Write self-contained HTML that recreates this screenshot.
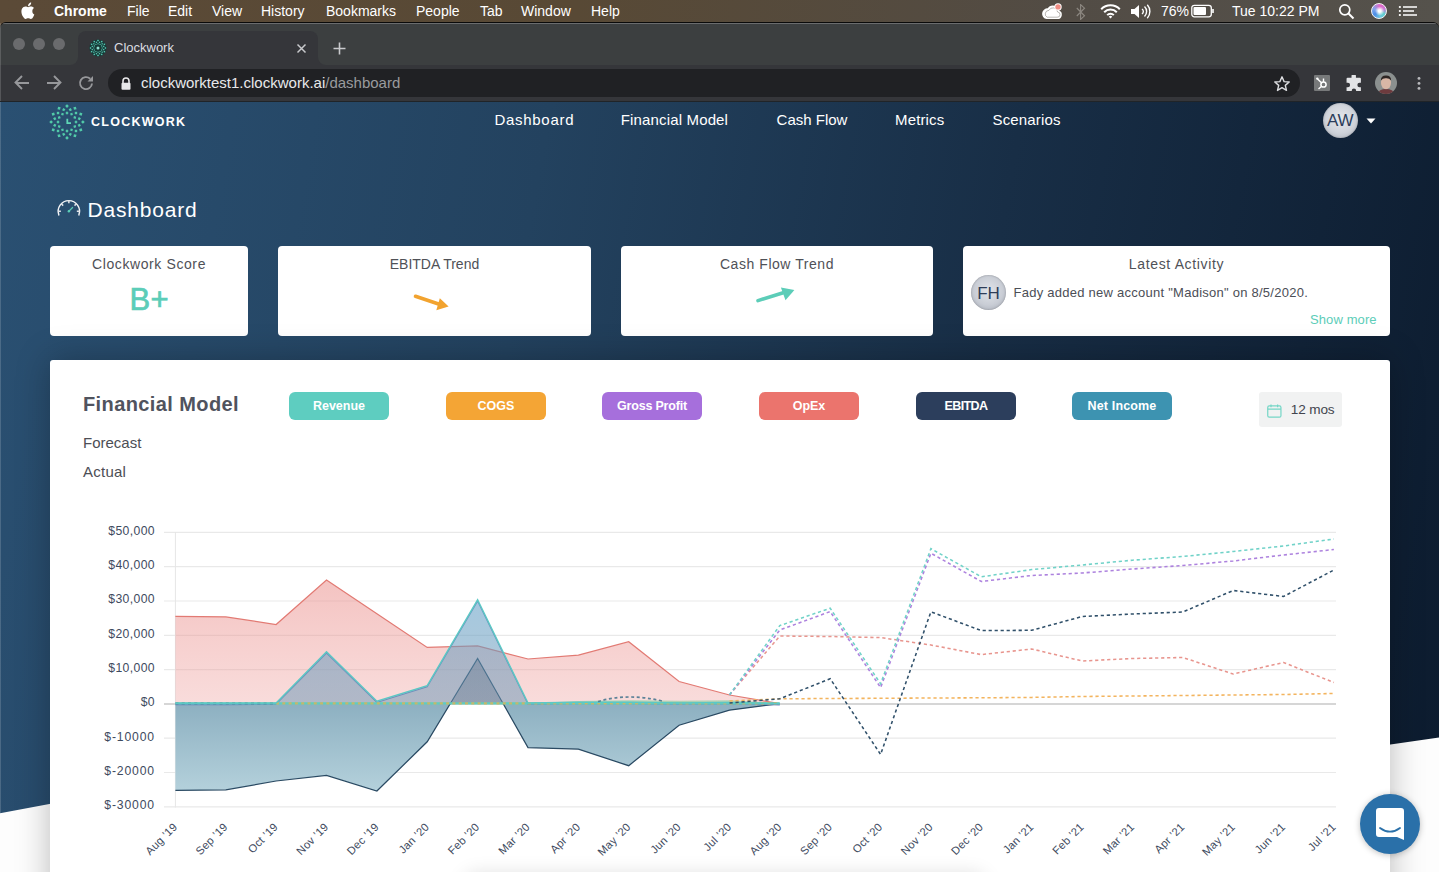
<!DOCTYPE html>
<html><head><meta charset="utf-8">
<style>
*{margin:0;padding:0;box-sizing:border-box}
html,body{width:1439px;height:872px;overflow:hidden;background:#fff;font-family:"Liberation Sans",sans-serif}
.a{position:absolute;white-space:nowrap}
#menubar{position:absolute;left:0;top:0;width:1439px;height:30px;background:linear-gradient(90deg,#5b4a37 0%,#584935 40%,#524c45 75%,#55524c 100%)}
.mb{position:absolute;top:3px;font-size:14px;color:#fff;line-height:16px}
#frame{position:absolute;left:0;top:22px;width:1439px;height:79px;background:#3c3f40;border-top:1px solid #0a0a0a;border-radius:6px 6px 0 0;overflow:hidden}
#page{position:absolute;left:0;top:101px;width:1439px;height:771px;overflow:hidden;background:linear-gradient(100deg,#2a5072 0%,#23425f 35%,#182e46 65%,#0c1b2e 100%)}
.card{position:absolute;background:#fff;border-radius:4px}
.ct{position:absolute;font-size:14px;color:#4f5157;line-height:1;white-space:nowrap}
.nav{position:absolute;font-size:15px;color:#fff;line-height:1;white-space:nowrap}
.btn{position:absolute;width:100px;height:28px;border-radius:6px;color:#fff;font-size:12.5px;font-weight:bold;text-align:center;line-height:28px}
</style></head><body>

<div id="menubar">
  <svg class="a" style="left:20px;top:2px" width="15" height="17" viewBox="0 0 15 17"><path fill="#fff" d="M12.3 9.1c0-2 1.6-2.9 1.7-3-0.9-1.4-2.4-1.6-2.9-1.6-1.2-0.1-2.4 0.7-3 0.7-0.6 0-1.6-0.7-2.6-0.7C4.100 4.500 2.800 5.300 2.100 6.600 0.700 9.100 1.700 12.800 3.100 14.800c0.700 1 1.500 2.100 2.500 2.100 1-0.1 1.400-0.600 2.600-0.600 1.200 0 1.500 0.600 2.600 0.600 1.100 0 1.800-1 2.400-2 0.800-1.100 1.100-2.200 1.100-2.300-0.100 0-2.100-0.800-2.000-3.500zM10.400 3.100c0.500-0.700 0.900-1.600 0.800-2.500-0.800 0-1.700 0.500-2.300 1.200-0.500 0.600-0.900 1.500-0.800 2.400 0.900 0.100 1.700-0.400 2.300-1.100z"/></svg>
  <div class="mb" style="left:54px;font-weight:bold">Chrome</div>
  <div class="mb" style="left:127px">File</div>
  <div class="mb" style="left:168px">Edit</div>
  <div class="mb" style="left:212px">View</div>
  <div class="mb" style="left:261px">History</div>
  <div class="mb" style="left:326px">Bookmarks</div>
  <div class="mb" style="left:416px">People</div>
  <div class="mb" style="left:480px">Tab</div>
  <div class="mb" style="left:521px">Window</div>
  <div class="mb" style="left:591px">Help</div>
  
  <svg class="a" style="left:1041px;top:3px" width="23" height="17" viewBox="0 0 23 17"><path d="M5.8 15.3H16.4A3.6 3.6 0 0 0 17.6 8.3A5.6 5.6 0 0 0 7.2 6.2A4.6 4.6 0 0 0 5.8 15.3Z" fill="#fff" stroke="#fff" stroke-width="1.6"/><path d="M6.2 14.2H16.2A2.6 2.6 0 0 0 16.6 9A4.6 4.6 0 0 0 7.9 7.4A3.6 3.6 0 0 0 6.2 14.2Z" fill="none" stroke="#6b655e" stroke-width="0.6" opacity="0.8"/><circle cx="17" cy="3.9" r="3.7" fill="#fff"/><circle cx="17" cy="3.9" r="2.7" fill="#f08c83"/></svg>
  <svg class="a" style="left:1075.5px;top:3.6px" width="10" height="16" viewBox="0 0 10 16"><path d="M0.8 4L8.5 11.8L4.6 15.4V0.6L8.5 4.2L0.8 12" stroke="#8c8780" stroke-width="1.15" fill="none" stroke-linejoin="miter"/></svg>
  <svg class="a" style="left:1100px;top:4px" width="21" height="15" viewBox="0 0 21 15"><path d="M1.2 5.2A13 13 0 0 1 19.8 5.2M4.2 8.2A8.8 8.8 0 0 1 16.8 8.2M7.2 11.1A4.6 4.6 0 0 1 13.8 11.1" stroke="#fff" stroke-width="2" fill="none"/><path d="M8.8 12.7L10.5 14.5L12.2 12.7A2.4 2.4 0 0 0 8.8 12.7Z" fill="#fff"/></svg>
  <svg class="a" style="left:1130px;top:4px" width="22" height="15" viewBox="0 0 22 15"><path d="M1 5H4.5L9 1V14L4.5 10H1Z" fill="#fff"/><path d="M12 5A3 3 0 0 1 12 10M14.5 2.5A7 7 0 0 1 14.5 12.5M17.3 0.8A10 10 0 0 1 17.3 14.2" stroke="#fff" stroke-width="1.4" fill="none"/></svg>
  <svg class="a" style="left:1191px;top:4px" width="24" height="14" viewBox="0 0 24 14"><rect x="0.8" y="1.3" width="19.5" height="11.5" rx="2.5" stroke="#fff" stroke-width="1.3" fill="none"/><rect x="2.5" y="3" width="12.5" height="8" rx="1" fill="#fff"/><path d="M22 5V9" stroke="#fff" stroke-width="1.6"/></svg>
  <svg class="a" style="left:1338px;top:3px" width="17" height="17" viewBox="0 0 17 17"><circle cx="6.8" cy="6.8" r="5" stroke="#fff" stroke-width="1.7" fill="none"/><path d="M10.5 10.5L15.5 15.5" stroke="#fff" stroke-width="2"/></svg>
  <div class="a" style="left:1370.8px;top:3px;width:16px;height:16px;border-radius:50%;border:1.2px solid #f4f4f6;background:radial-gradient(circle at 55% 50%,#ffffff 0 12%,rgba(255,255,255,0) 45%),conic-gradient(from 10deg,#e565c6,#c97bd8 60deg,#5fd1cf 110deg,#6ec8e0 160deg,#4d8de6 220deg,#7fa6ec 280deg,#e565c6)"></div>
  <svg class="a" style="left:1398px;top:4px" width="20" height="14" viewBox="0 0 20 14"><path d="M5 3H19M5 7H16M5 11H19" stroke="#fff" stroke-width="1.7"/><rect x="0.9" y="2.1" width="1.9" height="1.8" fill="#fff"/><rect x="0.9" y="6.1" width="1.9" height="1.8" fill="#fff"/><rect x="0.9" y="10.1" width="1.9" height="1.8" fill="#fff"/></svg>
<div class="mb" style="left:1161px;font-size:14px">76%</div>
  <div class="mb" style="left:1232px">Tue 10:22 PM</div>
</div>

<div id="frame">
  <div class="a" style="left:0;top:0;width:1439px;height:1px;background:#6a6c6e"></div>
  <div class="a" style="left:13px;top:15px;width:12px;height:12px;border-radius:50%;background:#6a6b6d"></div>
  <div class="a" style="left:33px;top:15px;width:12px;height:12px;border-radius:50%;background:#6a6b6d"></div>
  <div class="a" style="left:53px;top:15px;width:12px;height:12px;border-radius:50%;background:#6a6b6d"></div>
  <div class="a" style="left:70px;top:34px;width:256px;height:8px;background:#35363a"></div><div class="a" style="left:70px;top:34px;width:8px;height:8px;background:#3c3f40;border-radius:0 0 8px 0"></div><div class="a" style="left:318px;top:34px;width:8px;height:8px;background:#3c3f40;border-radius:0 0 0 8px"></div><div class="a" style="left:78px;top:8px;width:240px;height:34px;background:#35363a;border-radius:8px 8px 0 0"></div>
  <svg class="a" style="left:88.2px;top:14.9px" width="20" height="20" viewBox="-10 -10 20 20"><circle r="8.6" fill="#123a36" opacity="0.85"/><g fill="#55c4b0"><rect x="-0.75" y="-8.15" width="1.5" height="1.5" transform="rotate(45 0.00 -7.40)"/><rect x="2.95" y="-7.16" width="1.5" height="1.5" transform="rotate(75 3.70 -6.41)"/><rect x="5.66" y="-4.45" width="1.5" height="1.5" transform="rotate(105 6.41 -3.70)"/><rect x="6.65" y="-0.75" width="1.5" height="1.5" transform="rotate(135 7.40 -0.00)"/><rect x="5.66" y="2.95" width="1.5" height="1.5" transform="rotate(165 6.41 3.70)"/><rect x="2.95" y="5.66" width="1.5" height="1.5" transform="rotate(195 3.70 6.41)"/><rect x="-0.75" y="6.65" width="1.5" height="1.5" transform="rotate(225 0.00 7.40)"/><rect x="-4.45" y="5.66" width="1.5" height="1.5" transform="rotate(255 -3.70 6.41)"/><rect x="-7.16" y="2.95" width="1.5" height="1.5" transform="rotate(285 -6.41 3.70)"/><rect x="-8.15" y="-0.75" width="1.5" height="1.5" transform="rotate(315 -7.40 0.00)"/><rect x="-7.16" y="-4.45" width="1.5" height="1.5" transform="rotate(345 -6.41 -3.70)"/><rect x="-4.45" y="-7.16" width="1.5" height="1.5" transform="rotate(375 -3.70 -6.41)"/><rect x="0.88" y="-6.35" width="1.3" height="1.3" transform="rotate(60 1.53 -5.70)"/><rect x="3.52" y="-4.82" width="1.3" height="1.3" transform="rotate(90 4.17 -4.17)"/><rect x="5.05" y="-2.18" width="1.3" height="1.3" transform="rotate(120 5.70 -1.53)"/><rect x="5.05" y="0.88" width="1.3" height="1.3" transform="rotate(150 5.70 1.53)"/><rect x="3.52" y="3.52" width="1.3" height="1.3" transform="rotate(180 4.17 4.17)"/><rect x="0.88" y="5.05" width="1.3" height="1.3" transform="rotate(210 1.53 5.70)"/><rect x="-2.18" y="5.05" width="1.3" height="1.3" transform="rotate(240 -1.53 5.70)"/><rect x="-4.82" y="3.52" width="1.3" height="1.3" transform="rotate(270 -4.17 4.17)"/><rect x="-6.35" y="0.88" width="1.3" height="1.3" transform="rotate(300 -5.70 1.53)"/><rect x="-6.35" y="-2.18" width="1.3" height="1.3" transform="rotate(330 -5.70 -1.53)"/><rect x="-4.82" y="-4.82" width="1.3" height="1.3" transform="rotate(360 -4.17 -4.17)"/><rect x="-2.18" y="-6.35" width="1.3" height="1.3" transform="rotate(390 -1.53 -5.70)"/><rect x="-0.60" y="-4.80" width="1.2" height="1.2" transform="rotate(45 0.00 -4.20)"/><rect x="1.50" y="-4.24" width="1.2" height="1.2" transform="rotate(75 2.10 -3.64)"/><rect x="3.04" y="-2.70" width="1.2" height="1.2" transform="rotate(105 3.64 -2.10)"/><rect x="3.60" y="-0.60" width="1.2" height="1.2" transform="rotate(135 4.20 -0.00)"/><rect x="3.04" y="1.50" width="1.2" height="1.2" transform="rotate(165 3.64 2.10)"/><rect x="1.50" y="3.04" width="1.2" height="1.2" transform="rotate(195 2.10 3.64)"/><rect x="-0.60" y="3.60" width="1.2" height="1.2" transform="rotate(225 0.00 4.20)"/><rect x="-2.70" y="3.04" width="1.2" height="1.2" transform="rotate(255 -2.10 3.64)"/><rect x="-4.24" y="1.50" width="1.2" height="1.2" transform="rotate(285 -3.64 2.10)"/><rect x="-4.80" y="-0.60" width="1.2" height="1.2" transform="rotate(315 -4.20 0.00)"/><rect x="-4.24" y="-2.70" width="1.2" height="1.2" transform="rotate(345 -3.64 -2.10)"/><rect x="-2.70" y="-4.24" width="1.2" height="1.2" transform="rotate(375 -2.10 -3.64)"/></g><circle r="1.5" fill="#8fe0d0"/></svg>
  <div class="a" style="left:114px;top:17px;font-size:13px;color:#dcdde0;line-height:16px">Clockwork</div>
  <svg class="a" style="left:296px;top:20px" width="11" height="11" viewBox="0 0 11 11"><path d="M1.5 1.5L9.5 9.5M9.5 1.5L1.5 9.5" stroke="#c9cacd" stroke-width="1.5"/></svg>
  <svg class="a" style="left:332px;top:18px" width="15" height="15" viewBox="0 0 15 15"><path d="M7.5 1.5V13.5M1.5 7.5H13.5" stroke="#c9cacd" stroke-width="1.6"/></svg>
  <div class="a" style="left:0;top:42px;width:1439px;height:37px;background:#35363a"></div>
  <svg class="a" style="left:13px;top:51px" width="18" height="18" viewBox="0 0 18 18"><path d="M16 9H3M9 2L2.5 8.5L9 15" stroke="#97989b" stroke-width="1.9" fill="none"/></svg>
  <svg class="a" style="left:45px;top:51px" width="18" height="18" viewBox="0 0 18 18"><path d="M2 9H15M9 2L15.5 8.5L9 15" stroke="#97989b" stroke-width="1.9" fill="none"/></svg>
  <svg class="a" style="left:77px;top:51px" width="18" height="18" viewBox="0 0 18 18"><path d="M15 9.5A6 6 0 1 1 13.2 4.8" stroke="#97989b" stroke-width="1.9" fill="none"/><path d="M16 2V7.5H10.5Z" fill="#97989b"/></svg>
  <div class="a" style="left:108px;top:46.2px;width:1192px;height:27.5px;border-radius:14px;background:#202124"></div>
  <svg class="a" style="left:120px;top:54px" width="12" height="13" viewBox="0 0 12 13"><path d="M3 6V4A3 3 0 0 1 9 4V6" stroke="#e8e8ea" stroke-width="1.6" fill="none"/><rect x="1.5" y="5.8" width="9" height="7" rx="1" fill="#e8e8ea"/></svg>
  <div class="a" style="left:141px;top:51px;font-size:15px;color:#e8e9eb;line-height:18px">clockworktest1.clockwork.ai<span style="color:#9a9b9e">/dashboard</span></div>
  <svg class="a" style="left:1273px;top:52px" width="18" height="18" viewBox="0 0 18 18"><path d="M9 1.8L11.1 6.6L16.2 7L12.3 10.4L13.5 15.4L9 12.7L4.5 15.4L5.7 10.4L1.8 7L6.9 6.6Z" stroke="#dcdde0" stroke-width="1.4" fill="none" stroke-linejoin="round"/></svg>
  <div class="a" style="left:1314px;top:52px;width:16px;height:16px;background:#77797a;border-radius:1px"></div>
  <svg class="a" style="left:1314px;top:52px" width="16" height="16" viewBox="1 1 16 16"><circle cx="10.5" cy="10.5" r="2.6" stroke="#fff" stroke-width="1.5" fill="none"/><path d="M10.5 7.9V4.5M8.6 12.3L5.5 15M8.5 8.8L4.5 5" stroke="#fff" stroke-width="1.4"/><circle cx="4.3" cy="4.6" r="1.2" fill="#fff"/></svg>
  <svg class="a" style="left:1346px;top:52px" width="16" height="16" viewBox="1.5 1.5 14.5 14.5"><path fill="#e3e4e6" d="M6.5 2.5a2 2 0 0 1 4 0V4H14a1 1 0 0 1 1 1v3.5h-1.2a2 2 0 0 0 0 4H15V16a1 1 0 0 1-1 1h-3.3v-1.2a2 2 0 0 0-4 0V17H3a1 1 0 0 1-1-1v-3.5h1.2a2 2 0 0 0 0-4H2V5a1 1 0 0 1 1-1h3.5z"/></svg>
  <svg class="a" style="left:1375px;top:48.8px" width="22" height="22" viewBox="0 0 22 22"><defs><clipPath id="cav"><circle cx="11" cy="11" r="11"/></clipPath></defs><g clip-path="url(#cav)"><rect width="22" height="22" fill="#8b908f"/><path d="M2 22Q4 17 11 17Q18 17 20 22Z" fill="#6d3b3e"/><ellipse cx="11" cy="11" rx="5" ry="6.2" fill="#d9b7a6"/><path d="M5.8 8.5Q6 3.5 11 3.6Q16 3.5 16.2 8.5Q14 6 11 6.3Q8 6 5.8 8.5Z" fill="#2e2624"/></g></svg>
  <svg class="a" style="left:1416px;top:52px" width="6" height="18" viewBox="0 0 6 18"><circle cx="3" cy="3.4" r="1.45" fill="#b9babd"/><circle cx="3" cy="8.4" r="1.45" fill="#b9babd"/><circle cx="3" cy="13.4" r="1.45" fill="#b9babd"/></svg>
</div>

<div id="page">
  <div class="a" style="left:0;top:0;width:1439px;height:1px;background:#202428;z-index:5"></div>
  <svg class="a" style="left:0;top:0" width="1439" height="771" viewBox="0 0 1439 771"><defs><linearGradient id="gBg" x1="0" y1="0" x2="1" y2="0"><stop offset="0" stop-color="#f3f3f3"/><stop offset="1" stop-color="#f7f7f7"/></linearGradient></defs><path d="M0 712.2L60 700.9L1380 645L1439 636.5V771H0Z" fill="#fdfdfd"/></svg>
  <!-- logo -->
  <svg class="a" style="left:49.3px;top:2.8px" width="36" height="36" viewBox="-18 -18 36 36" ><g fill="#52cba9"><rect x="-1.30" y="-17.20" width="2.6" height="2.6" transform="rotate(45 0.00 -15.90)"/><rect x="6.65" y="-15.07" width="2.6" height="2.6" transform="rotate(75 7.95 -13.77)"/><rect x="12.47" y="-9.25" width="2.6" height="2.6" transform="rotate(105 13.77 -7.95)"/><rect x="14.60" y="-1.30" width="2.6" height="2.6" transform="rotate(135 15.90 -0.00)"/><rect x="12.47" y="6.65" width="2.6" height="2.6" transform="rotate(165 13.77 7.95)"/><rect x="6.65" y="12.47" width="2.6" height="2.6" transform="rotate(195 7.95 13.77)"/><rect x="-1.30" y="14.60" width="2.6" height="2.6" transform="rotate(225 0.00 15.90)"/><rect x="-9.25" y="12.47" width="2.6" height="2.6" transform="rotate(255 -7.95 13.77)"/><rect x="-15.07" y="6.65" width="2.6" height="2.6" transform="rotate(285 -13.77 7.95)"/><rect x="-17.20" y="-1.30" width="2.6" height="2.6" transform="rotate(315 -15.90 0.00)"/><rect x="-15.07" y="-9.25" width="2.6" height="2.6" transform="rotate(345 -13.77 -7.95)"/><rect x="-9.25" y="-15.07" width="2.6" height="2.6" transform="rotate(375 -7.95 -13.77)"/><rect x="2.09" y="-13.47" width="2.4" height="2.4" transform="rotate(60 3.29 -12.27)"/><rect x="7.78" y="-10.18" width="2.4" height="2.4" transform="rotate(90 8.98 -8.98)"/><rect x="11.07" y="-4.49" width="2.4" height="2.4" transform="rotate(120 12.27 -3.29)"/><rect x="11.07" y="2.09" width="2.4" height="2.4" transform="rotate(150 12.27 3.29)"/><rect x="7.78" y="7.78" width="2.4" height="2.4" transform="rotate(180 8.98 8.98)"/><rect x="2.09" y="11.07" width="2.4" height="2.4" transform="rotate(210 3.29 12.27)"/><rect x="-4.49" y="11.07" width="2.4" height="2.4" transform="rotate(240 -3.29 12.27)"/><rect x="-10.18" y="7.78" width="2.4" height="2.4" transform="rotate(270 -8.98 8.98)"/><rect x="-13.47" y="2.09" width="2.4" height="2.4" transform="rotate(300 -12.27 3.29)"/><rect x="-13.47" y="-4.49" width="2.4" height="2.4" transform="rotate(330 -12.27 -3.29)"/><rect x="-10.18" y="-10.18" width="2.4" height="2.4" transform="rotate(360 -8.98 -8.98)"/><rect x="-4.49" y="-13.47" width="2.4" height="2.4" transform="rotate(390 -3.29 -12.27)"/><rect x="-1.15" y="-10.15" width="2.3" height="2.3" transform="rotate(45 0.00 -9.00)"/><rect x="3.35" y="-8.94" width="2.3" height="2.3" transform="rotate(75 4.50 -7.79)"/><rect x="6.64" y="-5.65" width="2.3" height="2.3" transform="rotate(105 7.79 -4.50)"/><rect x="7.85" y="-1.15" width="2.3" height="2.3" transform="rotate(135 9.00 -0.00)"/><rect x="6.64" y="3.35" width="2.3" height="2.3" transform="rotate(165 7.79 4.50)"/><rect x="3.35" y="6.64" width="2.3" height="2.3" transform="rotate(195 4.50 7.79)"/><rect x="-1.15" y="7.85" width="2.3" height="2.3" transform="rotate(225 0.00 9.00)"/><rect x="-5.65" y="6.64" width="2.3" height="2.3" transform="rotate(255 -4.50 7.79)"/><rect x="-8.94" y="3.35" width="2.3" height="2.3" transform="rotate(285 -7.79 4.50)"/><rect x="-10.15" y="-1.15" width="2.3" height="2.3" transform="rotate(315 -9.00 0.00)"/><rect x="-8.94" y="-5.65" width="2.3" height="2.3" transform="rotate(345 -7.79 -4.50)"/><rect x="-5.65" y="-8.94" width="2.3" height="2.3" transform="rotate(375 -4.50 -7.79)"/></g><path d="M0.3 -3.2V1.1H4" stroke="#5fd6b6" stroke-width="1.8" fill="none"/></svg>
  <div class="a" style="left:91px;top:14.8px;font-size:12.5px;line-height:1;font-weight:bold;color:#fff;letter-spacing:1.25px">CLOCKWORK</div>
  <div class="nav" style="left:494.5px;top:11.3px;letter-spacing:0.7px">Dashboard</div>
  <div class="nav" style="left:620.8px;top:11.3px;letter-spacing:0.15px">Financial Model</div>
  <div class="nav" style="left:776.6px;top:11.3px">Cash Flow</div>
  <div class="nav" style="left:895px;top:11.3px;letter-spacing:0.15px">Metrics</div>
  <div class="nav" style="left:992.5px;top:11.3px;letter-spacing:0.15px">Scenarios</div>
  <div class="a" style="left:1322.8px;top:1.8px;width:35px;height:35px;border-radius:50%;background:radial-gradient(circle at 50% 45%,#e6e8ec 0%,#cfd3da 55%,#a9aeb8 100%);box-shadow:inset 0 0 2px rgba(0,0,0,.25)"></div>
  <div class="a" style="left:1322.8px;top:10.5px;width:35px;text-align:center;font-size:17px;line-height:1;color:#2c3d5a">AW</div>
  <svg class="a" style="left:1366px;top:16.7px" width="10" height="6" viewBox="0 0 10 6"><path d="M0.5 0.5H9.5L5 5.5Z" fill="#fff"/></svg>
  <!-- title -->
  <svg class="a" style="left:52px;top:91px" width="34" height="28" viewBox="0 0 34 28"><path d="M6.84 22.9A10.66 10.66 0 1 1 26.88 22.9" stroke="#f2f4f6" stroke-width="1.45" fill="none" stroke-linecap="round"/><path d="M16.86 8.6V11.3M9.32 11.72L11.2 13.6M24.4 11.72L22.52 13.6M6.2 19.26H8.9M27.52 19.26H24.82" stroke="#dfe3e8" stroke-width="1.5"/><path d="M16.86 19.26L20.6 15.5" stroke="#5ccdb8" stroke-width="1.2" stroke-linecap="round"/><circle cx="16.86" cy="19.26" r="1.2" fill="#5ccdb8"/></svg>
  <div class="a" style="left:87.6px;top:98.3px;font-size:21px;line-height:1;color:#fff;letter-spacing:0.8px">Dashboard</div>
  <!-- cards -->
  <div class="card" style="left:50px;top:145px;width:198px;height:90px"></div>
  <div class="card" style="left:278px;top:145px;width:313px;height:90px"></div>
  <div class="card" style="left:621px;top:145px;width:312px;height:90px"></div>
  <div class="card" style="left:963px;top:145px;width:427px;height:90px"></div>
  <div class="ct" style="left:50px;top:156.2px;width:198px;text-align:center;letter-spacing:0.6px">Clockwork Score</div>
  <div class="ct" style="left:278px;top:156.2px;width:313px;text-align:center">EBITDA Trend</div>
  <div class="ct" style="left:621px;top:156.2px;width:312px;text-align:center;letter-spacing:0.55px">Cash Flow Trend</div>
  <div class="ct" style="left:963px;top:156.2px;width:427px;text-align:center;letter-spacing:0.65px">Latest Activity</div>
  <div class="a" style="left:50px;top:182.6px;width:198px;text-align:center;font-size:31px;line-height:1;color:#5ccdb8;-webkit-text-stroke:0.7px #5ccdb8;letter-spacing:0.4px;text-indent:0.4px">B+</div>
  <svg class="a" style="left:410px;top:190px" width="44" height="26" viewBox="410 291 44 26"><path d="M415.5 296.3L440 304.5" stroke="#f2a32f" stroke-width="3.6" stroke-linecap="round"/><path d="M439.8 298.3L448.6 306.6L436.3 310.3Z" fill="#f2a32f"/></svg>
  <svg class="a" style="left:752px;top:184px" width="48" height="24" viewBox="752 285 48 24"><path d="M758 300.6L784 292.5" stroke="#5ccdb8" stroke-width="3.6" stroke-linecap="round"/><path d="M780.9 287.5L794.4 290L785.5 300.3Z" fill="#5ccdb8"/></svg>
  <div class="a" style="left:971px;top:174.2px;width:35px;height:35px;border-radius:50%;background:radial-gradient(circle at 50% 45%,#e1e4e9 0%,#c9cdd5 55%,#9fa5b0 100%);box-shadow:inset 0 0 2px rgba(0,0,0,.3)"></div>
  <div class="a" style="left:971px;top:184.1px;width:35px;text-align:center;font-size:17px;line-height:1;color:#2e3d58">FH</div>
  <div class="a" style="left:1013.6px;top:184.8px;font-size:13px;line-height:1;color:#4b4e56;letter-spacing:0.25px">Fady added new account "Madison" on 8/5/2020.</div>
  <div class="a" style="left:1310px;top:212.4px;font-size:13px;line-height:1;color:#5ccdb8;letter-spacing:0.1px">Show more</div>
  <!-- big card -->
  <div class="card" style="left:50px;top:259px;width:1340px;height:650px;border-radius:3px;box-shadow:0 0 34px rgba(0,0,0,.27)"></div>
</div>
<div class="a" style="left:83px;top:394.4px;font-size:20px;line-height:1;font-weight:bold;color:#50535e;letter-spacing:0.4px">Financial Model</div>
<div class="a" style="left:83px;top:434.8px;font-size:15px;line-height:1;color:#4c4e55">Forecast</div>
<div class="a" style="left:83px;top:463.6px;font-size:15px;line-height:1;color:#4c4e55;letter-spacing:0.25px">Actual</div>
<div class="btn" style="left:289px;top:392px;background:#5ecdc0">Revenue</div>
<div class="btn" style="left:446px;top:392px;background:#f4a535">COGS</div>
<div class="btn" style="left:602px;top:392px;background:#a66fdc;letter-spacing:-0.2px">Gross Profit</div>
<div class="btn" style="left:759px;top:392px;background:#eb746d">OpEx</div>
<div class="btn" style="left:916px;top:392px;background:#2c3e5c;letter-spacing:-0.6px">EBITDA</div>
<div class="btn" style="left:1072px;top:392px;background:#3d93b1;letter-spacing:0.15px">Net Income</div>
<div class="a" style="left:1259px;top:391.5px;width:83px;height:35.5px;border-radius:3px;background:#f1f2f2"></div>
<svg class="a" style="left:1266.5px;top:403.5px" width="15" height="14" viewBox="0 0 15 14"><rect x="0.75" y="1.9" width="13.2" height="11.3" rx="1.5" stroke="#74d6c6" stroke-width="1.2" fill="none"/><path d="M0.8 5.1H14M4 0.4V3.2M10.6 0.4V3.2" stroke="#74d6c6" stroke-width="1.2"/></svg>
<div class="a" style="left:1290.8px;top:403.3px;font-size:13.6px;line-height:1;color:#42454e;letter-spacing:-0.15px">12 mos</div>
<svg class="a" style="left:0;top:0" width="1439" height="872" viewBox="0 0 1439 872">
<defs>
<linearGradient id="gPink" x1="0" y1="532" x2="0" y2="704" gradientUnits="userSpaceOnUse"><stop offset="0" stop-color="#e98884" stop-opacity="0.6"/><stop offset="1" stop-color="#ee9e9c" stop-opacity="0.36"/></linearGradient>
<linearGradient id="gRev" x1="0" y1="590" x2="0" y2="704" gradientUnits="userSpaceOnUse"><stop offset="0" stop-color="#66a3ca" stop-opacity="0.6"/><stop offset="1" stop-color="#7199b6" stop-opacity="0.53"/></linearGradient>
<linearGradient id="gNeg" x1="0" y1="704" x2="0" y2="800" gradientUnits="userSpaceOnUse"><stop offset="0" stop-color="#8db0c1"/><stop offset="1" stop-color="#b8d4de"/></linearGradient>
<linearGradient id="gPos" x1="0" y1="650" x2="0" y2="704" gradientUnits="userSpaceOnUse"><stop offset="0" stop-color="#2d4a66" stop-opacity="0.25"/><stop offset="1" stop-color="#2d4a66" stop-opacity="0.22"/></linearGradient>
</defs>
<line x1="164" y1="532.4" x2="1336" y2="532.4" stroke="#e9e9e9" stroke-width="1.2"/>
<line x1="164" y1="566.7" x2="1336" y2="566.7" stroke="#e9e9e9" stroke-width="1.2"/>
<line x1="164" y1="601.0" x2="1336" y2="601.0" stroke="#e9e9e9" stroke-width="1.2"/>
<line x1="164" y1="635.3" x2="1336" y2="635.3" stroke="#e9e9e9" stroke-width="1.2"/>
<line x1="164" y1="669.6" x2="1336" y2="669.6" stroke="#e9e9e9" stroke-width="1.2"/>
<line x1="164" y1="703.9" x2="1336" y2="703.9" stroke="#d6d6d6" stroke-width="2"/>
<line x1="164" y1="738.2" x2="1336" y2="738.2" stroke="#e9e9e9" stroke-width="1.2"/>
<line x1="164" y1="772.5" x2="1336" y2="772.5" stroke="#e9e9e9" stroke-width="1.2"/>
<line x1="164" y1="806.8" x2="1336" y2="806.8" stroke="#e9e9e9" stroke-width="1.2"/>
<line x1="175.4" y1="532" x2="175.4" y2="807.5" stroke="#e6e6e6" stroke-width="1"/>
<text x="155" y="534.7" text-anchor="end" font-family="Liberation Sans" font-size="12.2" fill="#3e4a5e" letter-spacing="0.38">$50,000</text>
<text x="155" y="569.0" text-anchor="end" font-family="Liberation Sans" font-size="12.2" fill="#3e4a5e" letter-spacing="0.38">$40,000</text>
<text x="155" y="603.3" text-anchor="end" font-family="Liberation Sans" font-size="12.2" fill="#3e4a5e" letter-spacing="0.38">$30,000</text>
<text x="155" y="637.6" text-anchor="end" font-family="Liberation Sans" font-size="12.2" fill="#3e4a5e" letter-spacing="0.38">$20,000</text>
<text x="155" y="671.9" text-anchor="end" font-family="Liberation Sans" font-size="12.2" fill="#3e4a5e" letter-spacing="0.38">$10,000</text>
<text x="155" y="706.2" text-anchor="end" font-family="Liberation Sans" font-size="12.2" fill="#3e4a5e" letter-spacing="0.38">$0</text>
<text x="155" y="740.5" text-anchor="end" font-family="Liberation Sans" font-size="12.2" fill="#3e4a5e" letter-spacing="0.85">$-10000</text>
<text x="155" y="774.8" text-anchor="end" font-family="Liberation Sans" font-size="12.2" fill="#3e4a5e" letter-spacing="0.85">$-20000</text>
<text x="155" y="809.1" text-anchor="end" font-family="Liberation Sans" font-size="12.2" fill="#3e4a5e" letter-spacing="0.85">$-30000</text>
<clipPath id="cNeg"><rect x="0" y="703.6" width="1439" height="200"/></clipPath>
<clipPath id="cPos"><rect x="0" y="0" width="1439" height="703.6"/></clipPath>
<polygon points="175.4,703.6 175.4,616.3 225.8,616.9 276.1,624.5 326.5,580.0 376.9,613.8 427.2,647.4 477.6,645.8 528.0,659.0 578.4,655.2 628.7,641.7 679.1,681.5 729.5,695.0 779.8,703.6 779.8,703.6" fill="url(#gPink)"/>
<polygon points="175.4,703.6 175.4,790.4 225.8,789.8 276.1,781.0 326.5,775.3 376.9,791.0 427.2,741.8 477.6,658.4 528.0,747.6 578.4,749.2 628.7,765.7 679.1,725.2 729.5,710.2 779.8,703.6 779.8,703.6" fill="url(#gNeg)" clip-path="url(#cNeg)"/>
<polyline points="175.4,790.4 225.8,789.8 276.1,781.0 326.5,775.3 376.9,791.0 427.2,741.8 477.6,658.4 528.0,747.6 578.4,749.2 628.7,765.7 679.1,725.2 729.5,710.2 779.8,703.6" fill="none" stroke="#2a4a63" stroke-width="1.25" clip-path="url(#cNeg)"/>
<polyline points="175.4,790.4 225.8,789.8 276.1,781.0 326.5,775.3 376.9,791.0 427.2,741.8 477.6,658.4 528.0,747.6 578.4,749.2 628.7,765.7 679.1,725.2 729.5,710.2 779.8,703.6" fill="none" stroke="#2a4a63" stroke-width="1.1" clip-path="url(#cPos)"/>
<polyline points="175.4,616.3 225.8,616.9 276.1,624.5 326.5,580.0 376.9,613.8 427.2,647.4 477.6,645.8 528.0,659.0 578.4,655.2 628.7,641.7 679.1,681.5 729.5,695.0 779.8,703.6" fill="none" stroke="#e27a73" stroke-width="1.2"/>
<polyline points="175.4,703.3 225.8,703.3 276.1,703.0 326.5,651.8 376.9,701.2 427.2,685.6 477.6,599.8 528.0,703.0 578.4,702.3 628.7,702.3 679.1,703.0 729.5,702.5 779.8,703.6" fill="none" stroke="#6f7fc0" stroke-width="1.1" transform="translate(0,1.3)"/>
<polygon points="175.4,703.6 175.4,703.3 225.8,703.3 276.1,703.0 326.5,651.8 376.9,701.2 427.2,685.6 477.6,599.8 528.0,703.0 578.4,702.3 628.7,702.3 679.1,703.0 729.5,702.5 779.8,703.6 779.8,703.6" fill="url(#gRev)"/>
<polygon points="175.4,703.6 175.4,790.4 225.8,789.8 276.1,781.0 326.5,775.3 376.9,791.0 427.2,741.8 477.6,658.4 528.0,747.6 578.4,749.2 628.7,765.7 679.1,725.2 729.5,710.2 779.8,703.6 779.8,703.6" fill="url(#gPos)" clip-path="url(#cPos)"/>
<polygon points="528,703.3 578,701 629,700.3 679,700.8 730,700.2 780,703.3" fill="#93cfaa" opacity="0.75"/>
<line x1="175.4" y1="703.3" x2="779.8" y2="703.3" stroke="#5fcdbf" stroke-width="2.2"/>
<line x1="175.4" y1="703.3" x2="276" y2="703.3" stroke="#3f6e7e" stroke-width="2.2" stroke-dasharray="3,3.3" opacity="0.45"/>
<line x1="276" y1="703.3" x2="779.8" y2="703.3" stroke="#e9b24c" stroke-width="2.2" stroke-dasharray="3,3.3" opacity="0.75"/>
<polyline points="175.4,703.3 225.8,703.3 276.1,703.0 326.5,651.8 376.9,701.2 427.2,685.6 477.6,599.8 528.0,703.0 578.4,702.3 628.7,702.3 679.1,703.0 729.5,702.5 779.8,703.6" fill="none" stroke="#5cc8c4" stroke-width="1.4"/>
<path d="M598 701.5Q629 692.5 664 701.5" fill="none" stroke="#4a7890" stroke-width="1.7" stroke-dasharray="3,2.6" opacity="0.9"/>
<polyline points="729.5,701.0 779.8,698.8 830.2,698.5 880.6,698.3 930.9,698.0 981.3,697.8 1031.7,697.4 1082.1,696.5 1132.4,696.0 1182.8,695.5 1233.2,695.0 1283.5,694.5 1333.9,693.5" fill="none" stroke="#f3b45e" stroke-width="1.55" stroke-dasharray="3.2,2.8"/>
<polyline points="729.5,694.9 779.8,636.0 830.2,636.5 880.6,637.6 930.9,645.0 981.3,654.6 1031.7,649.0 1082.1,661.0 1132.4,658.5 1182.8,657.5 1233.2,674.0 1283.5,662.5 1333.9,682.5" fill="none" stroke="#e8958e" stroke-width="1.55" stroke-dasharray="3.2,2.8"/>
<polyline points="729.5,703.0 779.8,698.8 830.2,678.7 880.6,754.4 930.9,611.8 981.3,630.6 1031.7,630.3 1082.1,616.5 1132.4,614.0 1182.8,612.0 1233.2,590.5 1283.5,596.5 1333.9,570.0" fill="none" stroke="#30506a" stroke-width="1.55" stroke-dasharray="3.2,2.8"/>
<polyline points="729.5,694.9 779.8,630.0 830.2,611.6 880.6,687.6 930.9,553.2 981.3,581.5 1031.7,575.5 1082.1,573.0 1132.4,569.0 1182.8,565.5 1233.2,561.0 1283.5,555.0 1333.9,549.5" fill="none" stroke="#ad82de" stroke-width="1.55" stroke-dasharray="3.2,2.8"/>
<polyline points="729.5,694.9 779.8,625.6 830.2,608.2 880.6,683.8 930.9,548.7 981.3,576.8 1031.7,569.6 1082.1,565.0 1132.4,560.2 1182.8,556.5 1233.2,551.5 1283.5,546.0 1333.9,539.0" fill="none" stroke="#70d2c8" stroke-width="1.55" stroke-dasharray="3.2,2.8"/>
<text transform="translate(178.0,827.6) rotate(-45)" text-anchor="end" font-family="Liberation Sans" font-size="11.2" fill="#3e4a5e" letter-spacing="0.25">Aug &#8217;19</text>
<text transform="translate(228.4,827.6) rotate(-45)" text-anchor="end" font-family="Liberation Sans" font-size="11.2" fill="#3e4a5e" letter-spacing="0.25">Sep &#8217;19</text>
<text transform="translate(278.7,827.6) rotate(-45)" text-anchor="end" font-family="Liberation Sans" font-size="11.2" fill="#3e4a5e" letter-spacing="0.25">Oct &#8217;19</text>
<text transform="translate(329.1,827.6) rotate(-45)" text-anchor="end" font-family="Liberation Sans" font-size="11.2" fill="#3e4a5e" letter-spacing="0.25">Nov &#8217;19</text>
<text transform="translate(379.5,827.6) rotate(-45)" text-anchor="end" font-family="Liberation Sans" font-size="11.2" fill="#3e4a5e" letter-spacing="0.25">Dec &#8217;19</text>
<text transform="translate(429.9,827.6) rotate(-45)" text-anchor="end" font-family="Liberation Sans" font-size="11.2" fill="#3e4a5e" letter-spacing="0.25">Jan &#8217;20</text>
<text transform="translate(480.2,827.6) rotate(-45)" text-anchor="end" font-family="Liberation Sans" font-size="11.2" fill="#3e4a5e" letter-spacing="0.25">Feb &#8217;20</text>
<text transform="translate(530.6,827.6) rotate(-45)" text-anchor="end" font-family="Liberation Sans" font-size="11.2" fill="#3e4a5e" letter-spacing="0.25">Mar &#8217;20</text>
<text transform="translate(581.0,827.6) rotate(-45)" text-anchor="end" font-family="Liberation Sans" font-size="11.2" fill="#3e4a5e" letter-spacing="0.25">Apr &#8217;20</text>
<text transform="translate(631.3,827.6) rotate(-45)" text-anchor="end" font-family="Liberation Sans" font-size="11.2" fill="#3e4a5e" letter-spacing="0.25">May &#8217;20</text>
<text transform="translate(681.7,827.6) rotate(-45)" text-anchor="end" font-family="Liberation Sans" font-size="11.2" fill="#3e4a5e" letter-spacing="0.25">Jun &#8217;20</text>
<text transform="translate(732.1,827.6) rotate(-45)" text-anchor="end" font-family="Liberation Sans" font-size="11.2" fill="#3e4a5e" letter-spacing="0.25">Jul &#8217;20</text>
<text transform="translate(782.4,827.6) rotate(-45)" text-anchor="end" font-family="Liberation Sans" font-size="11.2" fill="#3e4a5e" letter-spacing="0.25">Aug &#8217;20</text>
<text transform="translate(832.8,827.6) rotate(-45)" text-anchor="end" font-family="Liberation Sans" font-size="11.2" fill="#3e4a5e" letter-spacing="0.25">Sep &#8217;20</text>
<text transform="translate(883.2,827.6) rotate(-45)" text-anchor="end" font-family="Liberation Sans" font-size="11.2" fill="#3e4a5e" letter-spacing="0.25">Oct &#8217;20</text>
<text transform="translate(933.5,827.6) rotate(-45)" text-anchor="end" font-family="Liberation Sans" font-size="11.2" fill="#3e4a5e" letter-spacing="0.25">Nov &#8217;20</text>
<text transform="translate(983.9,827.6) rotate(-45)" text-anchor="end" font-family="Liberation Sans" font-size="11.2" fill="#3e4a5e" letter-spacing="0.25">Dec &#8217;20</text>
<text transform="translate(1034.3,827.6) rotate(-45)" text-anchor="end" font-family="Liberation Sans" font-size="11.2" fill="#3e4a5e" letter-spacing="0.25">Jan &#8217;21</text>
<text transform="translate(1084.7,827.6) rotate(-45)" text-anchor="end" font-family="Liberation Sans" font-size="11.2" fill="#3e4a5e" letter-spacing="0.25">Feb &#8217;21</text>
<text transform="translate(1135.0,827.6) rotate(-45)" text-anchor="end" font-family="Liberation Sans" font-size="11.2" fill="#3e4a5e" letter-spacing="0.25">Mar &#8217;21</text>
<text transform="translate(1185.4,827.6) rotate(-45)" text-anchor="end" font-family="Liberation Sans" font-size="11.2" fill="#3e4a5e" letter-spacing="0.25">Apr &#8217;21</text>
<text transform="translate(1235.8,827.6) rotate(-45)" text-anchor="end" font-family="Liberation Sans" font-size="11.2" fill="#3e4a5e" letter-spacing="0.25">May &#8217;21</text>
<text transform="translate(1286.1,827.6) rotate(-45)" text-anchor="end" font-family="Liberation Sans" font-size="11.2" fill="#3e4a5e" letter-spacing="0.25">Jun &#8217;21</text>
<text transform="translate(1336.5,827.6) rotate(-45)" text-anchor="end" font-family="Liberation Sans" font-size="11.2" fill="#3e4a5e" letter-spacing="0.25">Jul &#8217;21</text>
</svg>
<div class="a" style="left:465px;top:878px;width:520px;height:20px;border-radius:14px;box-shadow:0 -3px 20px rgba(0,0,0,.15)"></div>
<div class="a" style="left:0;top:23px;width:1px;height:849px;background:rgba(255,255,255,.16)"></div>
<!-- chat -->
<div class="a" style="left:1360px;top:794px;width:60px;height:60px;border-radius:50%;background:#2a70a9;box-shadow:0 1px 6px rgba(0,0,0,.25)"></div>
<svg class="a" style="left:1374px;top:806px" width="32" height="36" viewBox="0 0 32 36"><path d="M5 2H27A3 3 0 0 1 30 5V34L23 31H5A3 3 0 0 1 2 28V5A3 3 0 0 1 5 2Z" fill="#fff"/><path d="M6 22Q16 29.4 26 22" stroke="#2a70a9" stroke-width="1.8" fill="none" stroke-linecap="round"/></svg>
</body></html>
